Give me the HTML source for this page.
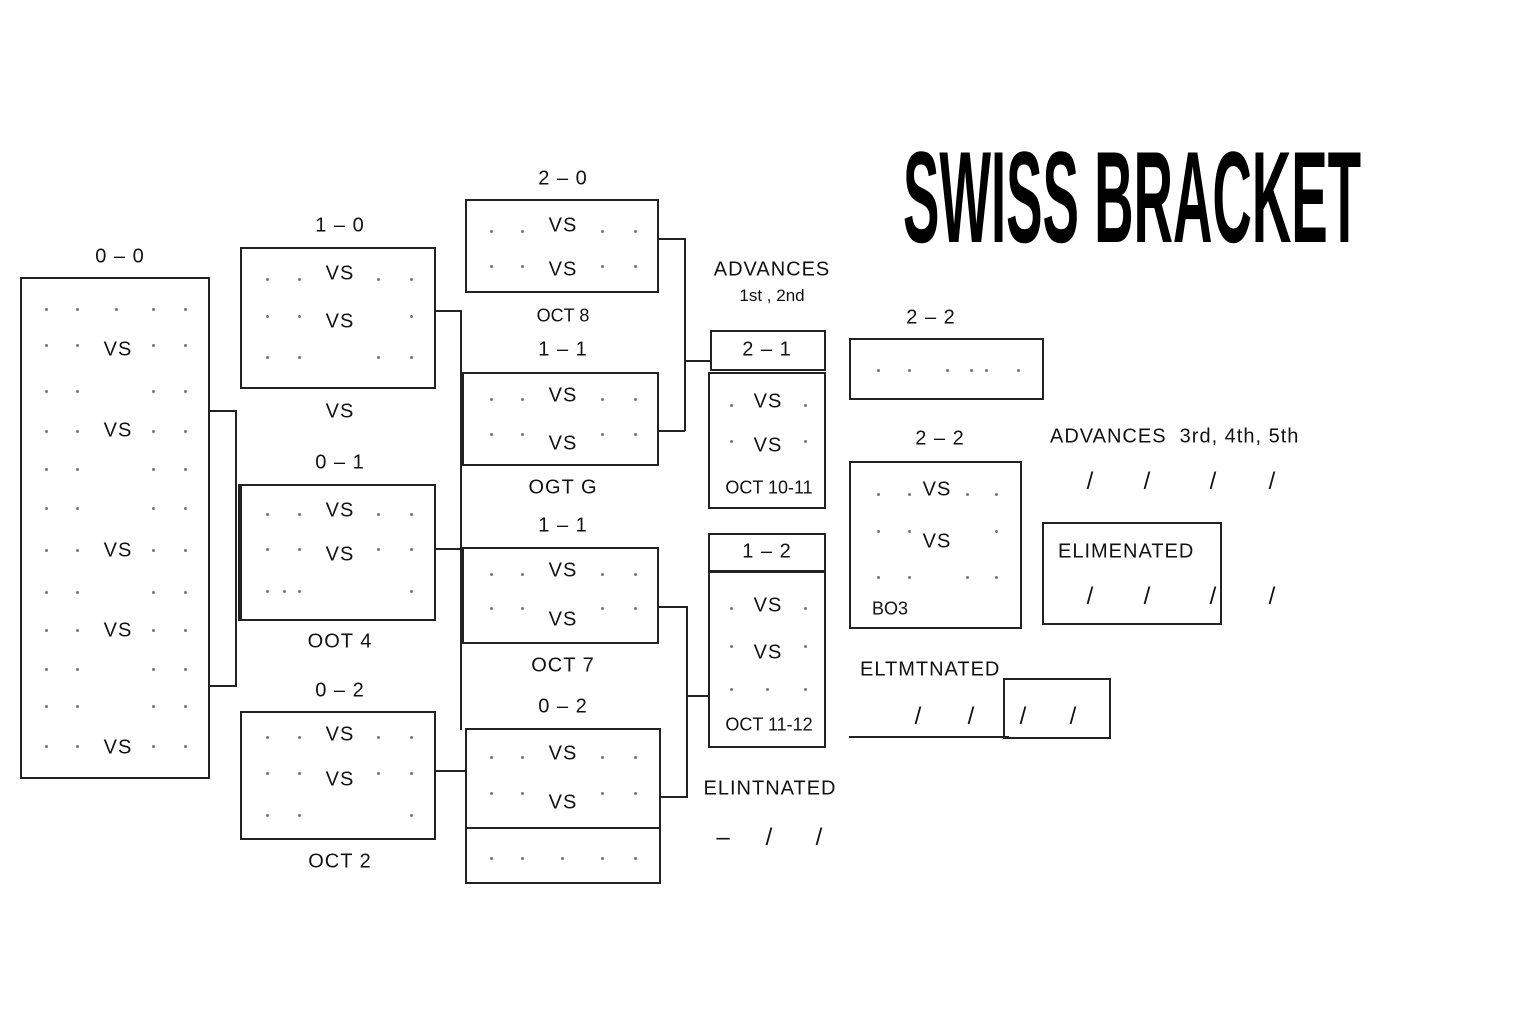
<!DOCTYPE html>
<html><head><meta charset="utf-8"><style>
body{margin:0;width:1536px;height:1024px;background:#fff;position:relative;overflow:hidden;font-family:"Liberation Sans",sans-serif;color:#111}
.b{position:absolute;border:2px solid #222;box-sizing:border-box}
.l{position:absolute;background:#222}
.t{position:absolute;transform:translate(-50%,-50%);font-size:20px;white-space:nowrap;letter-spacing:1px}
.s{position:absolute;transform:translate(-50%,-50%);font-size:18px;white-space:nowrap}
.d{position:absolute;width:3px;height:3px;background:#777;border-radius:50%}
.x{position:absolute;transform:translate(-50%,-50%);font-size:24px}
</style></head><body>
<div style="position:absolute;left:903px;top:122px;font-size:130px;font-weight:bold;transform:scaleX(0.42);transform-origin:0 0;white-space:nowrap;letter-spacing:0;color:#000">SWISS BRACKET</div>

<!-- 0-0 -->
<div class="t" style="left:120px;top:257px">0 – 0</div>
<div class="b" style="left:20px;top:277px;width:190px;height:502px"></div>
<div class="t" style="left:118px;top:350px">VS</div>
<div class="t" style="left:118px;top:431px">VS</div>
<div class="t" style="left:118px;top:551px">VS</div>
<div class="t" style="left:118px;top:631px">VS</div>
<div class="t" style="left:118px;top:748px">VS</div>
<div class="d" style="left:45px;top:308px"></div><div class="d" style="left:76px;top:308px"></div><div class="d" style="left:115px;top:308px"></div><div class="d" style="left:152px;top:308px"></div><div class="d" style="left:184px;top:308px"></div>
<div class="d" style="left:45px;top:344px"></div><div class="d" style="left:76px;top:344px"></div><div class="d" style="left:152px;top:344px"></div><div class="d" style="left:184px;top:344px"></div>
<div class="d" style="left:45px;top:390px"></div><div class="d" style="left:76px;top:390px"></div><div class="d" style="left:152px;top:390px"></div><div class="d" style="left:184px;top:390px"></div>
<div class="d" style="left:45px;top:430px"></div><div class="d" style="left:76px;top:430px"></div><div class="d" style="left:152px;top:430px"></div><div class="d" style="left:184px;top:430px"></div>
<div class="d" style="left:45px;top:468px"></div><div class="d" style="left:76px;top:468px"></div><div class="d" style="left:152px;top:468px"></div><div class="d" style="left:184px;top:468px"></div>
<div class="d" style="left:45px;top:507px"></div><div class="d" style="left:76px;top:507px"></div><div class="d" style="left:152px;top:507px"></div><div class="d" style="left:184px;top:507px"></div>
<div class="d" style="left:45px;top:549px"></div><div class="d" style="left:76px;top:549px"></div><div class="d" style="left:152px;top:549px"></div><div class="d" style="left:184px;top:549px"></div>
<div class="d" style="left:45px;top:591px"></div><div class="d" style="left:76px;top:591px"></div><div class="d" style="left:152px;top:591px"></div><div class="d" style="left:184px;top:591px"></div>
<div class="d" style="left:45px;top:629px"></div><div class="d" style="left:76px;top:629px"></div><div class="d" style="left:152px;top:629px"></div><div class="d" style="left:184px;top:629px"></div>
<div class="d" style="left:45px;top:668px"></div><div class="d" style="left:76px;top:668px"></div><div class="d" style="left:152px;top:668px"></div><div class="d" style="left:184px;top:668px"></div>
<div class="d" style="left:45px;top:705px"></div><div class="d" style="left:76px;top:705px"></div><div class="d" style="left:152px;top:705px"></div><div class="d" style="left:184px;top:705px"></div>
<div class="d" style="left:45px;top:745px"></div><div class="d" style="left:76px;top:745px"></div><div class="d" style="left:152px;top:745px"></div><div class="d" style="left:184px;top:745px"></div>
<div class="l" style="left:209px;top:410px;width:27px;height:2px"></div>
<div class="l" style="left:235px;top:410px;width:2px;height:277px"></div>
<div class="l" style="left:209px;top:685px;width:27px;height:2px"></div>
<div class="l" style="left:238px;top:484px;width:2px;height:137px"></div>

<!-- 1-0 -->
<div class="t" style="left:340px;top:226px">1 – 0</div>
<div class="b" style="left:240px;top:247px;width:196px;height:142px"></div>
<div class="t" style="left:340px;top:274px">VS</div>
<div class="t" style="left:340px;top:322px">VS</div>
<div class="t" style="left:340px;top:412px">VS</div>
<div class="d" style="left:266px;top:278px"></div><div class="d" style="left:298px;top:278px"></div><div class="d" style="left:377px;top:278px"></div><div class="d" style="left:410px;top:278px"></div>
<div class="d" style="left:266px;top:315px"></div><div class="d" style="left:298px;top:315px"></div><div class="d" style="left:410px;top:315px"></div>
<div class="d" style="left:266px;top:356px"></div><div class="d" style="left:298px;top:356px"></div><div class="d" style="left:377px;top:356px"></div><div class="d" style="left:410px;top:356px"></div>

<!-- 0-1 -->
<div class="t" style="left:340px;top:463px">0 – 1</div>
<div class="b" style="left:240px;top:484px;width:196px;height:137px"></div>
<div class="t" style="left:340px;top:511px">VS</div>
<div class="t" style="left:340px;top:555px">VS</div>
<div class="t" style="left:340px;top:642px">OOT 4</div>
<div class="d" style="left:266px;top:513px"></div><div class="d" style="left:298px;top:513px"></div><div class="d" style="left:377px;top:513px"></div><div class="d" style="left:410px;top:513px"></div>
<div class="d" style="left:266px;top:548px"></div><div class="d" style="left:298px;top:548px"></div><div class="d" style="left:377px;top:548px"></div><div class="d" style="left:410px;top:548px"></div>
<div class="d" style="left:266px;top:590px"></div><div class="d" style="left:283px;top:590px"></div><div class="d" style="left:298px;top:590px"></div><div class="d" style="left:410px;top:590px"></div>

<!-- 0-2 -->
<div class="t" style="left:340px;top:691px">0 – 2</div>
<div class="b" style="left:240px;top:711px;width:196px;height:129px"></div>
<div class="t" style="left:340px;top:735px">VS</div>
<div class="t" style="left:340px;top:780px">VS</div>
<div class="t" style="left:340px;top:862px">OCT 2</div>
<div class="d" style="left:266px;top:736px"></div><div class="d" style="left:298px;top:736px"></div><div class="d" style="left:377px;top:736px"></div><div class="d" style="left:410px;top:736px"></div>
<div class="d" style="left:266px;top:772px"></div><div class="d" style="left:298px;top:772px"></div><div class="d" style="left:377px;top:772px"></div><div class="d" style="left:410px;top:772px"></div>
<div class="d" style="left:266px;top:814px"></div><div class="d" style="left:298px;top:814px"></div><div class="d" style="left:410px;top:814px"></div>

<!-- connectors col2 -->
<div class="l" style="left:435px;top:310px;width:26px;height:2px"></div>
<div class="l" style="left:460px;top:310px;width:2px;height:415px"></div>
<div class="l" style="left:435px;top:548px;width:27px;height:2px"></div>
<div class="l" style="left:435px;top:770px;width:30px;height:2px"></div>
<div class="l" style="left:460px;top:640px;width:2px;height:90px"></div>

<!-- 2-0 -->
<div class="t" style="left:563px;top:179px">2 – 0</div>
<div class="b" style="left:465px;top:199px;width:194px;height:94px"></div>
<div class="t" style="left:563px;top:226px">VS</div>
<div class="t" style="left:563px;top:270px">VS</div>
<div class="s" style="left:563px;top:316px">OCT 8</div>
<div class="d" style="left:490px;top:230px"></div><div class="d" style="left:521px;top:230px"></div><div class="d" style="left:601px;top:230px"></div><div class="d" style="left:634px;top:230px"></div>
<div class="d" style="left:490px;top:265px"></div><div class="d" style="left:521px;top:265px"></div><div class="d" style="left:601px;top:265px"></div><div class="d" style="left:634px;top:265px"></div>

<!-- 1-1 -->
<div class="t" style="left:563px;top:350px">1 – 1</div>
<div class="b" style="left:462px;top:372px;width:197px;height:94px"></div>
<div class="t" style="left:563px;top:396px">VS</div>
<div class="t" style="left:563px;top:444px">VS</div>
<div class="t" style="left:563px;top:488px">OGT G</div>
<div class="d" style="left:490px;top:398px"></div><div class="d" style="left:521px;top:398px"></div><div class="d" style="left:601px;top:398px"></div><div class="d" style="left:634px;top:398px"></div>
<div class="d" style="left:490px;top:433px"></div><div class="d" style="left:521px;top:433px"></div><div class="d" style="left:601px;top:433px"></div><div class="d" style="left:634px;top:433px"></div>

<!-- 1-1 b -->
<div class="t" style="left:563px;top:526px">1 – 1</div>
<div class="b" style="left:462px;top:547px;width:197px;height:97px"></div>
<div class="t" style="left:563px;top:571px">VS</div>
<div class="t" style="left:563px;top:620px">VS</div>
<div class="t" style="left:563px;top:666px">OCT 7</div>
<div class="d" style="left:490px;top:573px"></div><div class="d" style="left:521px;top:573px"></div><div class="d" style="left:601px;top:573px"></div><div class="d" style="left:634px;top:573px"></div>
<div class="d" style="left:490px;top:607px"></div><div class="d" style="left:521px;top:607px"></div><div class="d" style="left:601px;top:607px"></div><div class="d" style="left:634px;top:607px"></div>

<!-- 0-2 b -->
<div class="t" style="left:563px;top:707px">0 – 2</div>
<div class="b" style="left:465px;top:728px;width:196px;height:156px"></div>
<div class="l" style="left:465px;top:827px;width:196px;height:2px"></div>
<div class="t" style="left:563px;top:754px">VS</div>
<div class="t" style="left:563px;top:803px">VS</div>
<div class="d" style="left:490px;top:756px"></div><div class="d" style="left:521px;top:756px"></div><div class="d" style="left:601px;top:756px"></div><div class="d" style="left:634px;top:756px"></div>
<div class="d" style="left:490px;top:792px"></div><div class="d" style="left:521px;top:792px"></div><div class="d" style="left:601px;top:792px"></div><div class="d" style="left:634px;top:792px"></div>
<div class="d" style="left:490px;top:857px"></div><div class="d" style="left:521px;top:857px"></div><div class="d" style="left:561px;top:857px"></div><div class="d" style="left:601px;top:857px"></div><div class="d" style="left:634px;top:857px"></div>

<!-- connectors col3 -->
<div class="l" style="left:658px;top:238px;width:27px;height:2px"></div>
<div class="l" style="left:684px;top:238px;width:2px;height:193px"></div>
<div class="l" style="left:658px;top:430px;width:27px;height:2px"></div>
<div class="l" style="left:684px;top:360px;width:26px;height:2px"></div>
<div class="l" style="left:658px;top:606px;width:29px;height:2px"></div>
<div class="l" style="left:686px;top:606px;width:2px;height:192px"></div>
<div class="l" style="left:660px;top:796px;width:27px;height:2px"></div>
<div class="l" style="left:686px;top:695px;width:22px;height:2px"></div>

<!-- advances 1 -->
<div class="t" style="left:772px;top:270px">ADVANCES</div>
<div class="s" style="left:772px;top:296px;font-size:17px">1st , 2nd</div>
<div class="b" style="left:710px;top:330px;width:116px;height:41px"></div>
<div class="t" style="left:767px;top:350px">2 – 1</div>
<div class="b" style="left:708px;top:372px;width:118px;height:137px"></div>
<div class="t" style="left:768px;top:402px">VS</div>
<div class="t" style="left:768px;top:446px">VS</div>
<div class="s" style="left:769px;top:488px">OCT 10-11</div>
<div class="d" style="left:730px;top:404px"></div><div class="d" style="left:804px;top:404px"></div>
<div class="d" style="left:730px;top:440px"></div><div class="d" style="left:804px;top:440px"></div>

<div class="b" style="left:708px;top:533px;width:118px;height:39px"></div>
<div class="t" style="left:767px;top:552px">1 – 2</div>
<div class="b" style="left:708px;top:571px;width:118px;height:177px"></div>
<div class="t" style="left:768px;top:606px">VS</div>
<div class="t" style="left:768px;top:653px">VS</div>
<div class="s" style="left:769px;top:725px">OCT 11-12</div>
<div class="d" style="left:730px;top:607px"></div><div class="d" style="left:804px;top:607px"></div>
<div class="d" style="left:730px;top:645px"></div><div class="d" style="left:804px;top:645px"></div>
<div class="d" style="left:730px;top:688px"></div><div class="d" style="left:766px;top:688px"></div><div class="d" style="left:804px;top:688px"></div>

<div class="t" style="left:770px;top:789px">ELINTNATED</div>
<div class="x" style="left:723px;top:838px">–</div>
<div class="x" style="left:769px;top:838px">/</div>
<div class="x" style="left:819px;top:838px">/</div>

<!-- 2-2 -->
<div class="t" style="left:931px;top:318px">2 – 2</div>
<div class="b" style="left:849px;top:338px;width:195px;height:62px"></div>
<div class="d" style="left:877px;top:369px"></div><div class="d" style="left:908px;top:369px"></div><div class="d" style="left:946px;top:369px"></div><div class="d" style="left:970px;top:369px"></div><div class="d" style="left:985px;top:369px"></div><div class="d" style="left:1017px;top:369px"></div>

<div class="t" style="left:940px;top:439px">2 – 2</div>
<div class="b" style="left:849px;top:461px;width:173px;height:168px"></div>
<div class="t" style="left:937px;top:490px">VS</div>
<div class="t" style="left:937px;top:542px">VS</div>
<div class="s" style="left:890px;top:609px">BO3</div>
<div class="d" style="left:877px;top:493px"></div><div class="d" style="left:908px;top:493px"></div><div class="d" style="left:966px;top:493px"></div><div class="d" style="left:995px;top:493px"></div>
<div class="d" style="left:877px;top:530px"></div><div class="d" style="left:908px;top:530px"></div><div class="d" style="left:995px;top:530px"></div>
<div class="d" style="left:877px;top:576px"></div><div class="d" style="left:908px;top:576px"></div><div class="d" style="left:966px;top:576px"></div><div class="d" style="left:995px;top:576px"></div>

<div class="s" style="left:1050px;top:437px;transform:translate(0,-50%);font-size:20px;letter-spacing:1px">ADVANCES &nbsp;3rd, 4th, 5th</div>
<div class="x" style="left:1090px;top:482px">/</div><div class="x" style="left:1147px;top:482px">/</div><div class="x" style="left:1213px;top:482px">/</div><div class="x" style="left:1272px;top:482px">/</div>

<div class="b" style="left:1042px;top:522px;width:180px;height:103px"></div>
<div class="s" style="left:1058px;top:552px;transform:translate(0,-50%);font-size:20px;letter-spacing:1px">ELIMENATED</div>
<div class="x" style="left:1090px;top:597px">/</div><div class="x" style="left:1147px;top:597px">/</div><div class="x" style="left:1213px;top:597px">/</div><div class="x" style="left:1272px;top:597px">/</div>

<div class="s" style="left:860px;top:670px;transform:translate(0,-50%);font-size:20px;letter-spacing:1px">ELTMTNATED</div>
<div class="b" style="left:1003px;top:678px;width:108px;height:61px"></div>
<div class="l" style="left:849px;top:736px;width:160px;height:2px"></div>
<div class="x" style="left:918px;top:717px">/</div><div class="x" style="left:971px;top:717px">/</div><div class="x" style="left:1023px;top:717px">/</div><div class="x" style="left:1073px;top:717px">/</div>
</body></html>
